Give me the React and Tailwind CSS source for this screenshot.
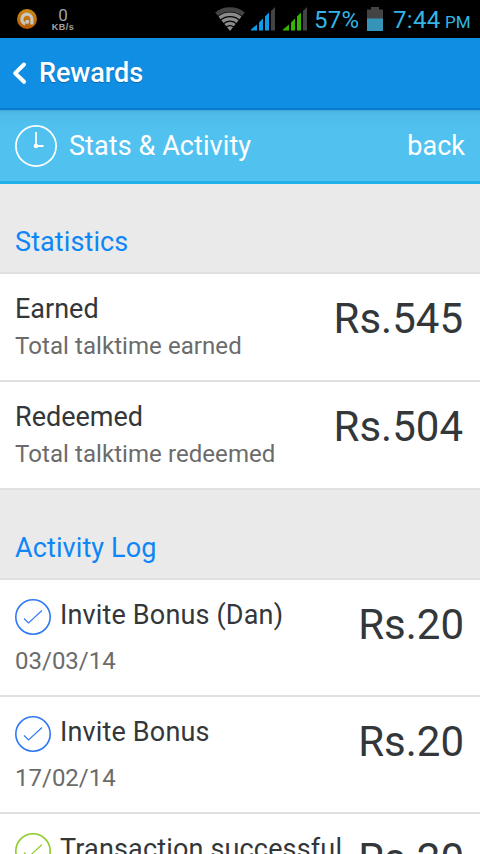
import React from 'react';

function StatusBar() {
  return (
    <div className="flex h-[38px] items-center bg-black text-[#33b5e5]">
      <svg className="ml-[17px] h-5 w-5 shrink-0" viewBox="0 0 20 20">
        <defs>
          <linearGradient id="orb" x1="0" y1="0" x2="0" y2="1">
            <stop offset="0" stopColor="#c98a12" />
            <stop offset="1" stopColor="#b85a08" />
          </linearGradient>
        </defs>
        <circle cx="10" cy="10" r="10" fill="url(#orb)" />
        <path d="M8.2 14.9A5 5 0 1 1 14.9 10V15.6" fill="none" stroke="#c9c5c0" strokeWidth="3.2" />
        <circle cx="10.2" cy="12.8" r="2.1" fill="#c9c5c0" />
      </svg>
      <div className="ml-[13px] flex w-[26px] flex-col items-center pt-px text-[#a3a3a3]">
        <span className="text-[17px] leading-[14px]">0</span>
        <span className="pt-px font-['Liberation_Sans',sans-serif] text-[9px] leading-[9px] font-bold whitespace-nowrap tracking-[0.5px]">KB/s</span>
      </div>
      <svg className="ml-[139px] h-[24px] w-[30px] shrink-0" viewBox="0 0 30 24" fill="none">
        <defs>
          <clipPath id="wedge">
            <path d="M15 24L-1 4V-2H31V4Z" />
          </clipPath>
        </defs>
        <g clipPath="url(#wedge)">
          <circle cx="15" cy="24" r="21.5" stroke="#444" strokeWidth="4.4" />
          <circle cx="15" cy="24" r="16.7" stroke="#8b8b8b" strokeWidth="3.4" />
          <circle cx="15" cy="24" r="12.1" stroke="#8b8b8b" strokeWidth="3.4" />
          <circle cx="15" cy="24" r="7.6" stroke="#8b8b8b" strokeWidth="3.2" />
          <circle cx="15" cy="24" r="4.7" fill="#8b8b8b" />
        </g>
      </svg>
      <svg className="ml-[6px] h-6 w-6 shrink-0" viewBox="0 0 24 24">
        <path d="M0 23.5V22.5L6 17.5V23.5ZM8 23.5V15.5L12 11.5V23.5ZM14 23.5V9.5L18 5.5V23.5Z" fill="#0d9bea" />
        <path d="M20 23.5V4L24 0V23.5Z" fill="#444" />
      </svg>
      <svg className="ml-[8px] h-6 w-6 shrink-0" viewBox="0 0 24 24">
        <path d="M0 23.5V22.5L6 17.5V23.5ZM8 23.5V15.5L12 11.5V23.5ZM14 23.5V9.5L18 5.5V23.5Z" fill="#35b400" />
        <path d="M20 23.5V4L24 0V23.5Z" fill="#444" />
      </svg>
      <span className="ml-[7px] w-[46px] pt-px text-[24px] leading-7 whitespace-nowrap tracking-[0.3px]">57%</span>
      <svg className="ml-[7px] h-6 w-4 shrink-0" viewBox="0 0 16 24">
        <path d="M0 2.5H4V0H12V2.5H16V12H0Z" fill="#444" />
        <path d="M0 11.5H16V24H0Z" fill="#3694b8" />
      </svg>
      <span className="ml-[10px] w-[48px] pt-px text-[24px] leading-7 whitespace-nowrap tracking-[0.3px]">7:44</span>
      <span className="ml-[4px] pt-[5px] text-[17px] leading-5">PM</span>
    </div>
  );
}

function SectionTitle({ children }) {
  return (
    <div className="h-[90px] border-b-2 border-[#e0e0e0] bg-[#eaeaea] px-[15px] pt-[42px] text-[27px] leading-8 tracking-[0.1px] text-[#0d86f7]">
      {children}
    </div>
  );
}

function Amount({ children }) {
  return <span className="mt-px mr-[2px] text-[42px] leading-[50px] whitespace-nowrap">{children}</span>;
}

function StatRow({ title, note, amount }) {
  return (
    <div className="flex h-[108px] items-start justify-between border-b-2 border-[#e0e0e0] bg-white px-[15px] pt-[19px]">
      <div>
        <div className="text-[27px] leading-8">{title}</div>
        <div className="mt-[7px] text-[24px] leading-7 tracking-[0.07px] text-[#6b6b6b]">{note}</div>
      </div>
      <Amount>{amount}</Amount>
    </div>
  );
}

function LogRow({ title, date, amount, tick }) {
  return (
    <div className="flex h-[117px] items-start justify-between border-b-2 border-[#e0e0e0] bg-white pr-[14px] pl-[15px] pt-[19px]">
      <div>
        <div className="flex h-8 items-start gap-[9px]">
          <svg className={`h-9 w-9 shrink-0 ${tick}`} viewBox="0 0 36 36" fill="none" stroke="currentColor">
            <circle cx="18" cy="18" r="17.2" strokeWidth="1.6" />
            <path d="M9 19.5L13.5 24L27 11.5" strokeWidth="1.1" />
          </svg>
          <span className="text-[27px] leading-8 whitespace-nowrap tracking-[0.16px]">{title}</span>
        </div>
        <div className="mt-[16px] text-[24px] leading-7 text-[#6b6b6b]">{date}</div>
      </div>
      <Amount>{amount}</Amount>
    </div>
  );
}

export default function App() {
  return (
    <div className="h-[854px] w-[480px] overflow-hidden bg-[#eaeaea] font-['Roboto',sans-serif] text-[#33373a]">
      <StatusBar />
      <header className="flex h-[72px] items-center border-b-2 border-[#067bd0] bg-[#108ee3] text-white">
        <svg className="ml-[12px] h-[24px] w-[15px]" viewBox="0 0 15 24" fill="none" stroke="currentColor">
          <path d="M12 3.5L3.2 12.2L12 20.8" strokeWidth="4" strokeLinecap="round" strokeLinejoin="round" />
        </svg>
        <h1 className="ml-[12px] text-[27px] leading-8 font-medium tracking-[-0.05px] [text-shadow:0_1px_1px_rgba(0,0,0,0.25)]">Rewards</h1>
      </header>
      <div className="flex h-[74px] items-center border-b-3 border-[#22b0ed] bg-[#51c2f0] bg-[linear-gradient(#45a9d3_0px,#4dbbe8_3px,#51c2f0_22px)] px-[15px] text-[27px] leading-8 text-white">
        <svg className="h-[42px] w-[42px]" viewBox="0 0 42 42" fill="none" stroke="currentColor">
          <circle cx="21" cy="21" r="20.1" strokeWidth="1.7" />
          <path d="M21 7V21H28.5" strokeWidth="1.8" />
          <circle cx="21" cy="21" r="2.3" fill="currentColor" stroke="none" />
        </svg>
        <span className="ml-[12px] tracking-[0.08px]">Stats &amp; Activity</span>
        <span className="ml-auto">back</span>
      </div>
      <SectionTitle>Statistics</SectionTitle>
      <StatRow title="Earned" note="Total talktime earned" amount="Rs.545" />
      <StatRow title="Redeemed" note="Total talktime redeemed" amount="Rs.504" />
      <SectionTitle>Activity Log</SectionTitle>
      <LogRow title="Invite Bonus (Dan)" date="03/03/14" amount="Rs.20" tick="text-[#2f78f5]" />
      <LogRow title="Invite Bonus" date="17/02/14" amount="Rs.20" tick="text-[#2f78f5]" />
      <LogRow title="Transaction successful" date="17/02/14" amount="Rs.20" tick="text-[#8bcc28]" />
    </div>
  );
}
